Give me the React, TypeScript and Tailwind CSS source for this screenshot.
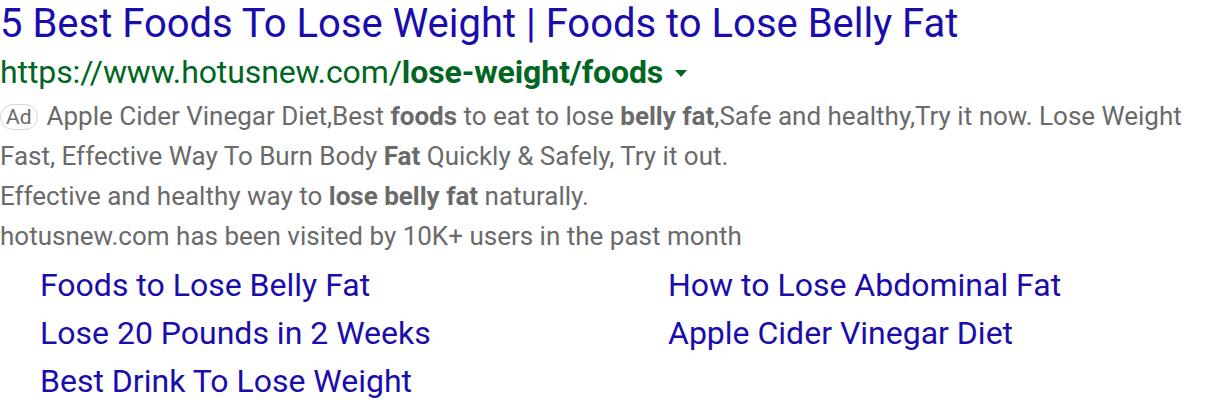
export default function App() {
  return (
    <div className="w-[1216px] h-[410px] bg-white overflow-hidden font-['Roboto',sans-serif]">
      <div className="text-[40px] leading-[48px] text-[#1a0dab] whitespace-nowrap">
        5 Best Foods To Lose Weight | Foods to Lose Belly Fat
      </div>
      <div className="flex items-center text-[32px] leading-[48px] text-[#006621] whitespace-nowrap tracking-[-0.1px]">
        <span>
          https://www.hotusnew.com/<b className="font-bold">lose-weight/foods</b>
        </span>
        <svg width="14" height="8" viewBox="0 0 14 8" className="ml-[11px] mt-[4px]">
          <path d="M1 0 L13 0 L7 7 Z" fill="#006621" />
        </svg>
      </div>
      <div className="text-[26px] leading-[40px] text-[#6a6a6a] w-[1195px]">
        <p>
          <span className="inline-block border border-[#d6d6d6] rounded-full text-[21px] leading-[24px] px-[5px] mr-[9px] align-[1px] text-[#6a6a6a]">Ad</span>
          <span>
            Apple Cider Vinegar Diet,Best <b>foods</b> to eat to lose <b>belly fat</b>,Safe and healthy,Try it now. Lose Weight Fast, Effective Way To Burn Body <b>Fat</b> Quickly &amp; Safely, Try it out.
          </span>
        </p>
        <p>
          Effective and healthy way to <b>lose belly fat</b> naturally.
        </p>
        <p>hotusnew.com has been visited by 10K+ users in the past month</p>
      </div>
      <div className="grid grid-cols-[628px_1fr] pl-[40px] text-[32px] leading-[48px] text-[#1a0dab] mt-[5px]">
        <div>Foods to Lose Belly Fat</div>
        <div>How to Lose Abdominal Fat</div>
        <div>Lose 20 Pounds in 2 Weeks</div>
        <div>Apple Cider Vinegar Diet</div>
        <div>Best Drink To Lose Weight</div>
      </div>
    </div>
  );
}
